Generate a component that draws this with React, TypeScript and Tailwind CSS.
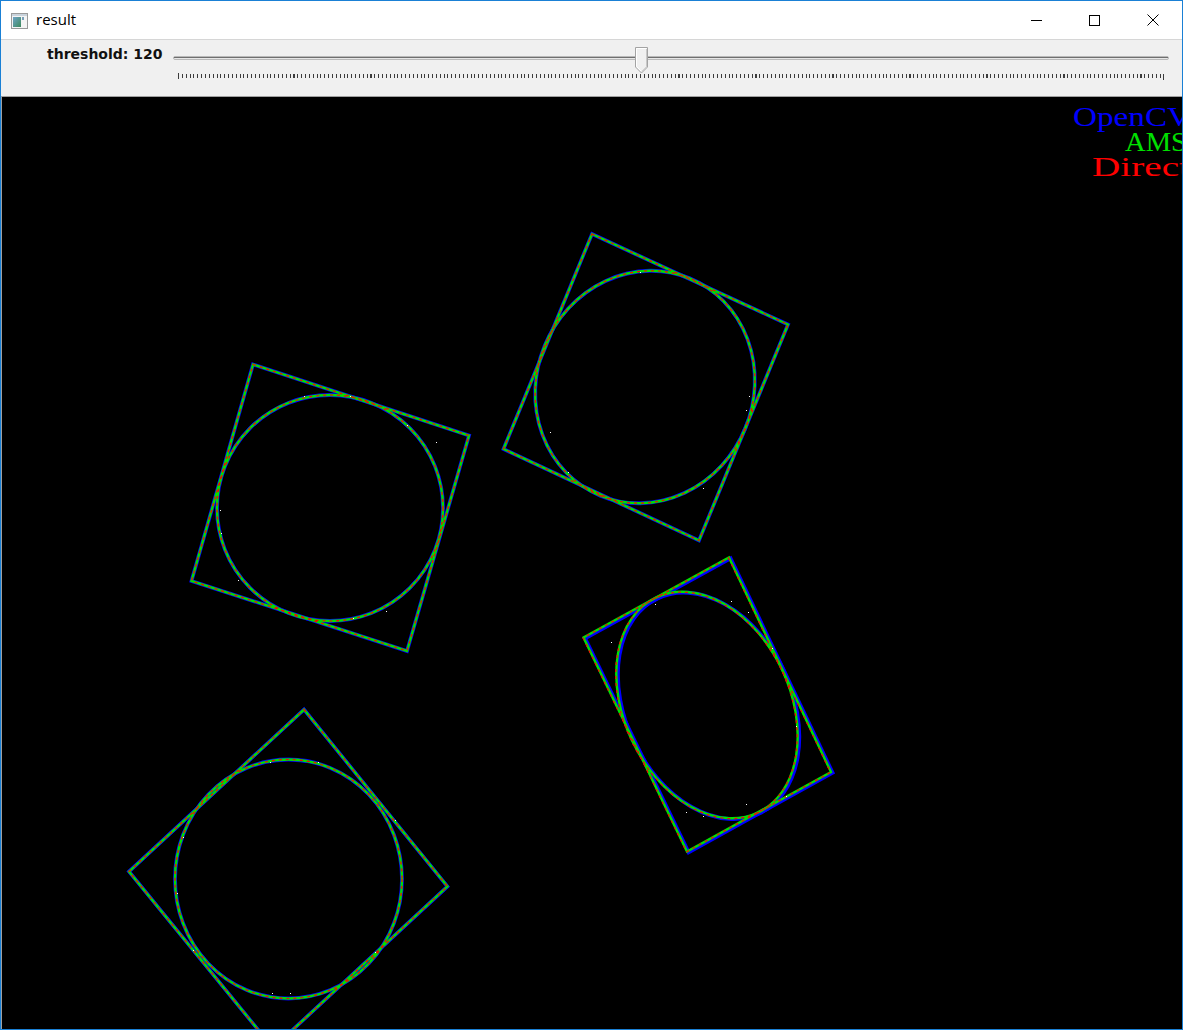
import React from "react";

type Pt = [number, number];

const pts = (p: Pt[]) => p.map(([x, y]) => `${x},${y}`).join(" ");

interface Fit {
  rect: Pt[];
  cx: number;
  cy: number;
  rx: number;
  ry: number;
  rot: number;
  blueShift?: Pt;
  redShift?: Pt;
  dots: Pt[];
}

const fits: Fit[] = [
  {
    rect: [[253, 364.5], [469, 435.5], [407, 651], [191.5, 581]],
    cx: 330, cy: 508, rx: 113, ry: 113, rot: 0,
    dots: [[304, 396], [350, 396], [407, 425], [436, 442], [220, 510], [221, 533], [353, 618], [386, 611], [238, 580]],
  },
  {
    rect: [[592, 234], [788, 324.5], [699, 540.5], [503.5, 449]],
    cx: 645, cy: 387, rx: 117.5, ry: 108.5, rot: 112.4,
    dots: [[640, 272], [749, 396], [550, 432], [568, 472], [703, 488], [746, 410]],
  },
  {
    rect: [[729, 557.5], [831, 772], [687, 851.5], [583.5, 637.5]],
    cx: 707, cy: 705, rx: 119, ry: 83, rot: 64.6,
    blueShift: [1.6, 0.8],
    redShift: [-0.6, 0.4],
    dots: [[655, 604], [731, 601], [748, 612], [772, 648], [611, 642], [796, 726], [786, 796], [686, 812], [703, 816], [746, 804]],
  },
  {
    rect: [[304, 709.5], [447.5, 886.5], [273, 1048], [129, 871.5]],
    cx: 288.5, cy: 879, rx: 113.5, ry: 119.5, rot: 0,
    dots: [[270, 762], [318, 762], [183, 837], [177, 893], [193, 950], [272, 993], [290, 993], [395, 820], [375, 952]],
  },
];

function Shape({ f }: { f: Fit }) {
  const b = f.blueShift ?? [0, 0];
  const r = f.redShift ?? [0, 0];
  const shift = (s: Pt) => f.rect.map(([x, y]) => [x + s[0], y + s[1]] as Pt);
  const rot = (s: Pt) => `rotate(${f.rot} ${f.cx + s[0]} ${f.cy + s[1]})`;
  return (
    <g fill="none">
      <polygon points={pts(shift(b))} stroke="#0000ff" strokeWidth={3.8} />
      <ellipse cx={f.cx + b[0]} cy={f.cy + b[1]} rx={f.rx} ry={f.ry} transform={rot(b)} stroke="#0000ff" strokeWidth={3.8} />
      <polygon points={pts(f.rect)} stroke="#00e000" strokeWidth={2.4} />
      <ellipse cx={f.cx} cy={f.cy} rx={f.rx} ry={f.ry} transform={rot([0, 0])} stroke="#00e000" strokeWidth={2.4} />
      <polygon points={pts(shift(r))} stroke="#ff0000" strokeWidth={1.2} strokeDasharray="3 4" />
      <ellipse cx={f.cx + r[0]} cy={f.cy + r[1]} rx={f.rx} ry={f.ry} transform={rot(r)} stroke="#ff0000" strokeWidth={1.2} strokeDasharray="3 4" />
      {f.dots.map(([x, y], i) => (
        <rect key={i} x={x} y={y} width={1} height={1} fill="#ffffff" />
      ))}
    </g>
  );
}

function TitleIcon() {
  return (
    <svg width="17" height="16" viewBox="0 0 17 16">
      <rect x="0.5" y="0.5" width="16" height="15" fill="#f4f4f4" stroke="#9a9a9a" />
      <rect x="1" y="1" width="15" height="2" fill="#c9d3dc" />
      <defs>
        <linearGradient id="ig" x1="0" y1="0" x2="1" y2="1">
          <stop offset="0" stopColor="#6fa3c7" />
          <stop offset="1" stopColor="#3c8a5c" />
        </linearGradient>
      </defs>
      <rect x="2" y="4" width="8" height="10" fill="url(#ig)" />
      <rect x="11" y="4" width="2" height="3" fill="#7aa0b8" />
    </svg>
  );
}

function Slider() {
  return (
    <div className="relative w-[996px] h-full">
      <div className="absolute left-0 right-0 top-[16px] h-[4px] rounded-[2px] bg-[#e6e6e6] border border-[#b9b9b9]">
        <div className="h-[1px] bg-[#6f6f6f]" />
      </div>
      <div className="absolute left-[5px] w-[986px] top-[34px] h-[4px] bg-[repeating-linear-gradient(90deg,#3c3c3c_0_1px,transparent_1px_3.85px)]" />
      <div className="absolute left-[5px] top-[33px] w-[1px] h-[6px] bg-[#3c3c3c]" />
      <div className="absolute left-[990px] top-[34px] w-[1px] h-[6px] bg-[#3c3c3c]" />
      <svg className="absolute left-[462px] top-[7px]" width="14" height="27" viewBox="0 0 14 27">
        <path d="M0.5 0.5 H12.5 V20 L6.5 26 L0.5 20 Z" fill="#f0f0f0" stroke="#a3a3a3" />
        <path d="M1.5 1.5 H11.5 M1.5 1.5 V19.5 L6.5 24.5" fill="none" stroke="#ffffff" />
        <path d="M11.5 2 V19.8 L6.8 24.5" fill="none" stroke="#c8c8c8" />
      </svg>
    </div>
  );
}

export default function App() {
  return (
    <div className="w-[1183px] h-[1030px] flex flex-col border border-[#1a80d5] bg-white font-['Open_Sans',sans-serif]">
      <div className="h-[39px] shrink-0 flex items-center bg-white border-b border-[#d6d6d6]">
        <div className="pl-[10px] pt-[1px] flex items-center">
          <TitleIcon />
        </div>
        <span className="ml-[8px] text-[15px] text-black leading-none pb-[1px]">result</span>
        <div className="ml-auto flex h-full">
          <div className="w-[58px] flex items-center justify-center">
            <div className="w-[11px] h-[1px] bg-black" />
          </div>
          <div className="w-[59px] flex items-center justify-center">
            <div className="w-[11px] h-[11px] border border-black" />
          </div>
          <div className="w-[58px] flex items-center justify-center">
            <svg width="12" height="12" viewBox="0 0 12 12">
              <path d="M0.5 0.5 L11.5 11.5 M11.5 0.5 L0.5 11.5" stroke="#000" strokeWidth="1" />
            </svg>
          </div>
        </div>
      </div>

      <div className="h-[56px] shrink-0 flex bg-[#f0f0f0]">
        <div className="w-[172px] pl-[46px] pt-[6px] text-[14px] font-bold text-[#111] font-['DejaVu_Sans',sans-serif] leading-[17px]">
          threshold: 120
        </div>
        <Slider />
      </div>

      <div className="flex-1 bg-black border-t border-l border-[#a0a0a0] overflow-hidden">
        <svg width="1180" height="932" viewBox="2 97 1180 932" className="block">
          {fits.map((f, i) => (
            <Shape key={i} f={f} />
          ))}
          <g fontFamily="'Liberation Serif', serif" fontSize="28">
            <text x="1073" y="126" fill="#0000ff" textLength="118" lengthAdjust="spacingAndGlyphs">OpenCV</text>
            <text x="1125" y="151" fill="#00e000" textLength="62" lengthAdjust="spacingAndGlyphs">AMS</text>
            <text x="1092" y="176" fill="#ff0000" textLength="98" lengthAdjust="spacingAndGlyphs">Direct</text>
          </g>
        </svg>
      </div>
    </div>
  );
}
